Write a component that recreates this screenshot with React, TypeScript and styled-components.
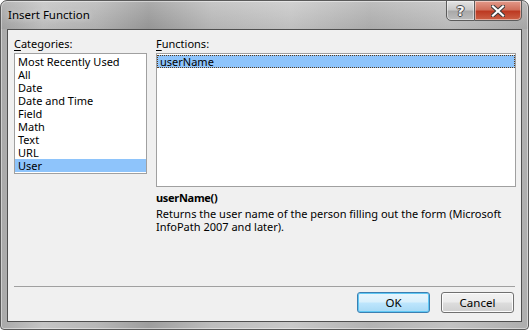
import styled, { createGlobalStyle } from 'styled-components';

const GlobalStyle = createGlobalStyle`
  html, body {
    margin: 0;
    padding: 0;
    background: #ffffff;
  }
  body {
    font-family: 'Noto Sans', 'Open Sans', sans-serif;
    font-size: 11px;
    color: #000000;
  }
`;

const categories = [
  'Most Recently Used',
  'All',
  'Date',
  'Date and Time',
  'Field',
  'Math',
  'Text',
  'URL',
  'User',
];

const Window = styled.div`
  box-sizing: border-box;
  width: 529px;
  height: 330px;
  display: flex;
  flex-direction: column;
  border: 1px solid #5a5a5a;
  border-radius: 7px 7px 4px 4px;
  background: linear-gradient(
    90deg,
    #a9a9a9 0%,
    #c4c4c4 8%,
    #b8b8b8 18%,
    #9d9d9d 28%,
    #bdbdbd 40%,
    #c9c9c9 55%,
    #b3b3b3 70%,
    #c2c2c2 85%,
    #aeaeae 100%
  );
  box-shadow: inset 0 0 0 1px rgba(255, 255, 255, 0.45);
  overflow: hidden;
`;

const TitleBar = styled.div`
  height: 28px;
  display: flex;
  align-items: flex-start;
  justify-content: space-between;
  padding-left: 7px;
  background: linear-gradient(180deg, rgba(255, 255, 255, 0.15), rgba(0, 0, 0, 0.05));
`;

const Title = styled.div`
  font-size: 11.5px;
  line-height: 16px;
  margin-top: 6px;
  color: #000000;
  text-shadow: 0 0 6px rgba(255, 255, 255, 0.8);
`;

const CaptionButtons = styled.div`
  display: flex;
  margin-top: -1px;
  margin-right: 6px;
`;

const CaptionButton = styled.div<{ $close?: boolean }>`
  box-sizing: border-box;
  width: ${(p) => (p.$close ? '47px' : '29px')};
  height: 21px;
  display: flex;
  align-items: center;
  justify-content: center;
  border: 1px solid #5b5b5b;
  border-left: ${(p) => (p.$close ? 'none' : '1px solid #5b5b5b')};
  border-radius: ${(p) => (p.$close ? '0 0 5px 0' : '0 0 0 5px')};
  background: ${(p) =>
    p.$close
      ? 'linear-gradient(180deg, #e39a8a 0%, #d0705c 45%, #bd3a22 55%, #cc6146 100%)'
      : 'linear-gradient(180deg, #e4e4e4 0%, #c9c9c9 45%, #a9a9a9 55%, #bdbdbd 100%)'};
  box-shadow: inset 0 0 0 1px rgba(255, 255, 255, 0.45);
`;

const HelpGlyph = styled.span`
  font-family: 'DejaVu Sans', sans-serif;
  font-weight: bold;
  font-size: 14px;
  line-height: 14px;
  color: #f4f4f4;
  text-shadow: 1px 0 0 #4a4a4a, -1px 0 0 #4a4a4a, 0 1px 0 #4a4a4a, 0 -1px 0 #4a4a4a;
`;

const CloseIcon = () => (
  <svg width="14" height="12" viewBox="0 0 14 12">
    <path d="M2 1.5 L12 10.5 M12 1.5 L2 10.5" stroke="#3a3a3a" strokeWidth="4.2" strokeLinecap="square" />
    <path d="M2 1.5 L12 10.5 M12 1.5 L2 10.5" stroke="#ffffff" strokeWidth="2.2" strokeLinecap="square" />
  </svg>
);

const Frame = styled.div`
  flex: 1;
  display: flex;
  padding: 0 6px 7px 6px;
`;

const Client = styled.div`
  flex: 1;
  display: flex;
  flex-direction: column;
  border: 1px solid #4f4f4f;
  background: #f0f0f0;
`;

const Columns = styled.div`
  flex: 1;
  display: grid;
  grid-template-columns: 133px 360px;
  column-gap: 9px;
  padding: 6px 5px 0 6px;
`;

const Column = styled.div`
  display: flex;
  flex-direction: column;
`;

const Label = styled.div`
  line-height: 16px;
  margin-bottom: 1px;
`;

const Mnemonic = styled.span`
  text-decoration: underline;
  text-underline-offset: 2px;
`;

const ListBox = styled.div<{ $height: number }>`
  box-sizing: border-box;
  height: ${(p) => p.$height}px;
  border: 1px solid #a0a0a0;
  background: #ffffff;
  padding: 1px 0;
`;

const ListItem = styled.div<{ $selected?: boolean; $focused?: boolean }>`
  box-sizing: border-box;
  height: 13px;
  line-height: 13px;
  padding-left: 3px;
  white-space: nowrap;
  background: ${(p) => (p.$selected ? '#8ec4fb' : 'transparent')};
  outline: ${(p) => (p.$focused ? '1px dotted #5a3a1a' : 'none')};
  outline-offset: -1px;
`;

const FuncName = styled.div`
  font-weight: bold;
  line-height: 13px;
  margin-top: 4px;
  letter-spacing: -0.3px;
`;

const Description = styled.div`
  line-height: 13px;
  margin-top: 3px;
`;

const Separator = styled.div`
  height: 1px;
  background: #a0a0a0;
  margin: 0 6px 0 6px;
`;

const ButtonRow = styled.div`
  display: flex;
  justify-content: flex-end;
  gap: 11px;
  padding: 5px 7px 8px 0;
`;

const Button = styled.button<{ $default?: boolean }>`
  box-sizing: border-box;
  width: 73px;
  height: 21px;
  padding: 0;
  font-family: 'Noto Sans', 'Open Sans', sans-serif;
  font-size: 11.5px;
  line-height: 16px;
  color: #000000;
  border-radius: 3px;
  border: 1px solid ${(p) => (p.$default ? '#3c7fb1' : '#707070')};
  background: ${(p) =>
    p.$default
      ? 'linear-gradient(180deg, #eaf6fd 0%, #d9f0fc 48%, #bee6fd 52%, #a7d9f5 100%)'
      : 'linear-gradient(180deg, #f2f2f2 0%, #ebebeb 48%, #dddddd 52%, #cfcfcf 100%)'};
  box-shadow: inset 0 0 0 1px ${(p) => (p.$default ? '#60c8f4' : '#fcfcfc')};
`;

const App = () => {
  return (
    <>
      <GlobalStyle />
      <Window>
        <TitleBar>
          <Title>Insert Function</Title>
          <CaptionButtons>
            <CaptionButton>
              <HelpGlyph>?</HelpGlyph>
            </CaptionButton>
            <CaptionButton $close>
              <CloseIcon />
            </CaptionButton>
          </CaptionButtons>
        </TitleBar>
        <Frame>
          <Client>
            <Columns>
              <Column>
                <Label>
                  <Mnemonic>C</Mnemonic>ategories:
                </Label>
                <ListBox $height={121}>
                  {categories.map((c) => (
                    <ListItem key={c} $selected={c === 'User'}>
                      {c}
                    </ListItem>
                  ))}
                </ListBox>
              </Column>
              <Column>
                <Label>
                  <Mnemonic>F</Mnemonic>unctions:
                </Label>
                <ListBox $height={134}>
                  <ListItem $selected $focused>
                    userName
                  </ListItem>
                </ListBox>
                <FuncName>userName()</FuncName>
                <Description>
                  Returns the user name of the person filling out the form (Microsoft InfoPath 2007 and
                  later).
                </Description>
              </Column>
            </Columns>
            <Separator />
            <ButtonRow>
              <Button $default>OK</Button>
              <Button>Cancel</Button>
            </ButtonRow>
          </Client>
        </Frame>
      </Window>
    </>
  );
};

export default App;
